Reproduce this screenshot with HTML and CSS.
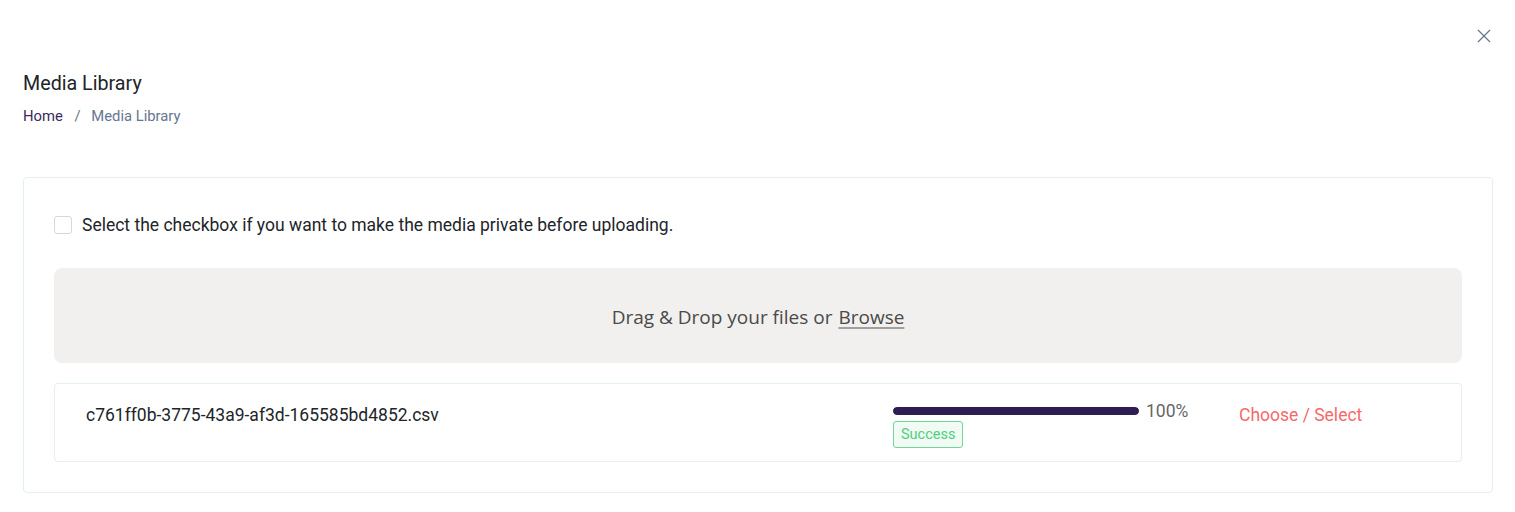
FILE: index.html
```html
<!DOCTYPE html>
<html lang="en">
<head>
    <meta charset="UTF-8">
    <title>Media Library</title>
    <link rel="stylesheet" href="styles.css">
</head>
<body>
    <div class="modal">
        <div class="modal-top">
            <button class="close-button" aria-label="Close">
                <svg width="14" height="14" viewBox="0 0 14 14"><path d="M1 1 L13 13 M13 1 L1 13" stroke="#6b7990" stroke-width="1.3" fill="none"/></svg>
            </button>
        </div>

        <header class="page-head">
            <h1>Media Library</h1>
            <nav class="breadcrumb">
                <a href="#">Home</a>
                <span class="sep">/</span>
                <span class="current">Media Library</span>
            </nav>
        </header>

        <section class="upload-card">
            <label class="private-check">
                <span class="box"></span>
                Select the checkbox if you want to make the media private before uploading.
            </label>

            <div class="drop-zone">
                Drag &amp; Drop your files or <u>Browse</u>
            </div>

            <div class="file-row">
                <div class="file-name">c761ff0b-3775-43a9-af3d-165585bd4852.csv</div>
                <div class="file-status">
                    <div class="progress-line">
                        <div class="progress"><div class="progress-fill" style="width: 100%"></div></div>
                        <span class="percent">100%</span>
                    </div>
                    <span class="badge-success">Success</span>
                </div>
                <a class="choose-link" href="#">Choose / Select</a>
            </div>
        </section>
    </div>
</body>
</html>
```

FILE: styles.css
```css
body {
    margin: 0;
    background: #fff;
    font-family: Roboto, "Liberation Sans", sans-serif;
    color: #212529;
}
.modal {
    padding: 0 22px 0 23px;
}
.modal-top {
    display: flex;
    justify-content: flex-end;
    padding: 29px 2px 0 0;
    height: 43px;
    box-sizing: border-box;
}
.close-button {
    background: none;
    border: none;
    padding: 0;
    width: 14px;
    height: 14px;
    cursor: pointer;
}
.page-head {
    padding-top: 27px;
}
.page-head h1 {
    margin: 0;
    font-size: 19.7px;
    font-weight: 400;
    line-height: 28px;
    color: #212529;
}
.breadcrumb {
    margin-top: 8px;
    font-size: 14.8px;
    line-height: 20px;
}
.breadcrumb a {
    color: #3a2b5e;
    text-decoration: none;
}
.breadcrumb .sep {
    color: #6c757d;
    padding: 0 7px 0 8px;
}
.breadcrumb .current {
    color: #667790;
}
.upload-card {
    margin-top: 51px;
    border: 1px solid #e4eef4;
    border-radius: 4px;
    padding: 36px 30px 30px 30px;
}
.private-check {
    display: flex;
    align-items: center;
    gap: 10px;
    font-size: 17.5px;
    line-height: 22px;
    color: #212529;
}
.private-check .box {
    width: 16px;
    height: 16px;
    border: 1px solid #d5d9de;
    border-radius: 3px;
}
.drop-zone {
    margin-top: 32px;
    height: 95px;
    box-sizing: border-box;
    padding-top: 2px;
    background: #f1f0ee;
    border-radius: 8px;
    display: flex;
    align-items: center;
    justify-content: center;
    font-family: "Open Sans", sans-serif;
    font-size: 19px;
    color: #4a4a4a;
}
.drop-zone u {
    text-decoration-color: #a0a0a0;
    text-underline-offset: 3px;
    text-decoration-thickness: 2px;
    margin-left: 6px;
}
.file-row {
    margin-top: 20px;
    border: 1px solid #e4eef4;
    border-radius: 4px;
    height: 79px;
    box-sizing: border-box;
    display: flex;
    align-items: flex-start;
    padding: 19px 0 0 31px;
}
.file-name {
    flex: 1;
    font-size: 17.5px;
    line-height: 24px;
    color: #212529;
}
.file-status {
    width: 346px;
    margin-top: -2px;
}
.progress-line {
    display: flex;
    align-items: center;
    gap: 7px;
    height: 20px;
}
.progress {
    width: 246px;
    height: 8px;
    border-radius: 4px;
    background: #e9e9ef;
    overflow: hidden;
}
.progress-fill {
    height: 100%;
    background: #2d1d53;
    border-radius: 4px;
}
.percent {
    font-size: 17.5px;
    color: #666;
    line-height: 20px;
}
.badge-success {
    display: block;
    width: fit-content;
    padding: 2px 7px;
    font-size: 14.5px;
    line-height: 21px;
    color: #4fcf7f;
    background: #effbf3;
    border: 1px solid #72d899;
    border-radius: 3px;
}
.choose-link {
    width: 222px;
    font-size: 17.5px;
    line-height: 24px;
    color: #f46a6a;
    text-decoration: none;
}
```
